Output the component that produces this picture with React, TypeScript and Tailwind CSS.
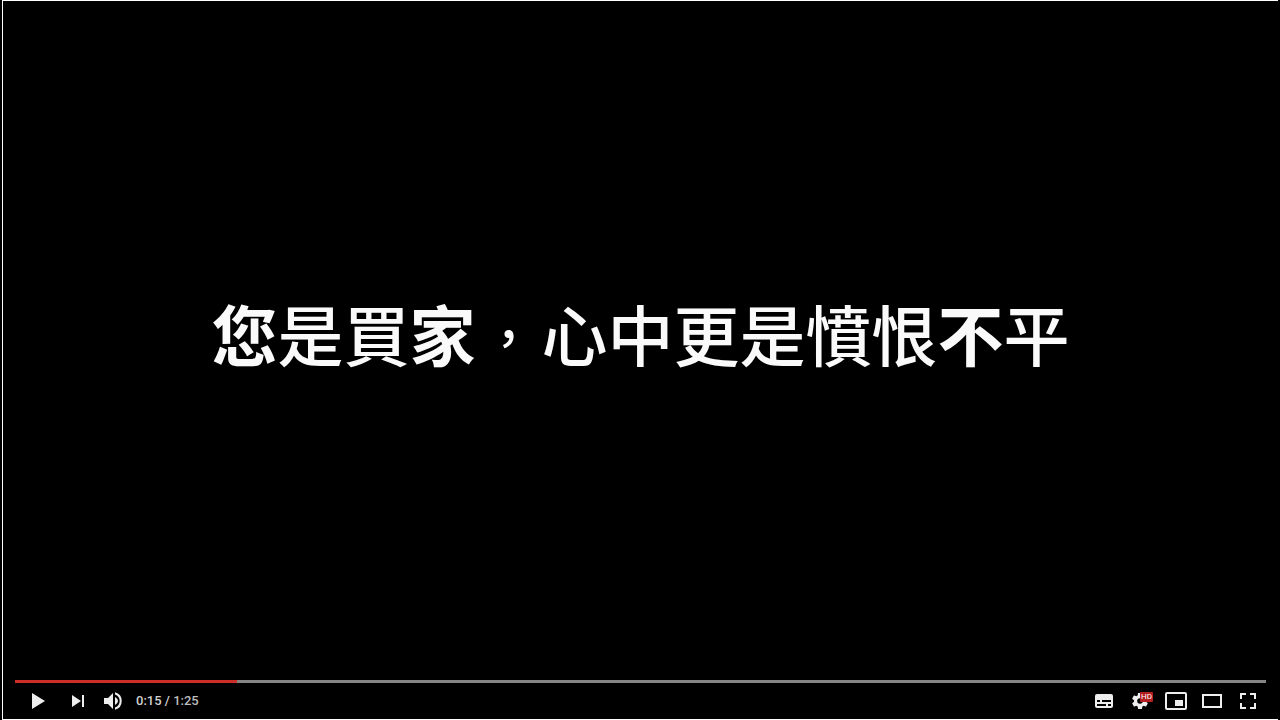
import React, { useState } from 'react';

const DURATION = 85;

const formatTime = (seconds: number) => {
  const rest = Math.floor(seconds % 60);
  return `${Math.floor(seconds / 60)}:${rest < 10 ? '0' : ''}${rest}`;
};

interface ControlButtonProps {
  label: string;
  children: React.ReactNode;
}

function ControlButton({ label, children }: ControlButtonProps) {
  return (
    <button
      type="button"
      aria-label={label}
      title={label}
      className="w-9 h-9 flex items-center justify-center text-[#eeeeee] hover:text-white"
    >
      <svg viewBox="0 0 36 36" className="w-9 h-9" fill="currentColor">
        {children}
      </svg>
    </button>
  );
}

function Caption() {
  return (
    <p className="text-center text-[66px] leading-[80px] font-medium text-[#fafafa] whitespace-nowrap">
      <b className="font-bold">您</b>是買<b className="font-bold">家</b>
      <span className="inline-block w-[66px] text-center text-[50px] leading-none align-[4px]">
        ，
      </span>
      心中更是憤恨
      <b className="font-bold">不</b>平
    </p>
  );
}

function App() {
  const [time] = useState(15.1);

  return (
    <div className="bg-black px-[2px]">
      <div
        lang="zh-Hant"
        className="h-screen flex flex-col border-y border-l border-white bg-black font-['Roboto','Noto_Sans_CJK_TC',sans-serif]"
      >
        <main className="flex-1 flex items-center justify-center overflow-hidden pb-1">
          <Caption />
        </main>

        <footer className="px-3">
          <div
            role="progressbar"
            aria-label="Progress"
            aria-valuemin={0}
            aria-valuemax={DURATION}
            aria-valuenow={time}
            className="h-[3px] bg-[#858585]"
          >
            <div
              className="h-full bg-[#cc2f28]"
              style={{ width: `${(time / DURATION) * 100}%` }}
            />
          </div>

          <div className="h-9 flex items-center justify-between">
            <div className="flex items-center pl-[5px]">
              <ControlButton label="Play">
                <path d="M12 10 L25 18 L12 26 Z" />
              </ControlButton>
              <div className="pl-1 flex items-center">
                <ControlButton label="Next">
                  <path d="M12 12 L21 18 L12 24 Z M22 12 H24 V24 H22 Z" />
                </ControlButton>
                <ControlButton label="Mute">
                  <path d="M8 15 V21 H12 L17 26 V10 L12 15 Z" />
                  <path d="M19 14 Q22 15.5 22 18 Q22 20.500 19 22 Z" />
                  <path d="M19 9.300 V11.400 A7 7 0 0 1 19 24.600 V26.700 A9 9 0 0 0 19 9.300 Z" />
                </ControlButton>
              </div>
              <div className="pl-1 text-[13px] font-medium text-[#d0d0d0]">
                <span>{formatTime(time)}</span>
                <span> / </span>
                <span className="text-[#bdbdbd]">{formatTime(DURATION)}</span>
              </div>
            </div>

            <div className="flex items-center">
              <ControlButton label="Subtitles">
                <path
                  fillRule="evenodd"
                  d="M11 11 H25 Q27 11 27 13 V23 Q27 25 25 25 H11 Q9 25 9 23 V13 Q9 11 11 11 Z M11 17 V19 H14 V17 Z M16 17 V19 H25 V17 Z M11 21 V23 H20 V21 Z M22 21 V23 H25 V21 Z"
                />
              </ControlButton>
              <div className="relative">
                <ControlButton label="Settings">
                  <path d="M23.940 18.780 C23.970 18.520 24 18.260 24 18 C24 17.730 23.970 17.480 23.940 17.220 L25.630 15.900 C25.780 15.780 25.830 15.560 25.730 15.390 L24.130 12.620 C24.030 12.450 23.820 12.380 23.640 12.450 L21.650 13.250 C21.240 12.930 20.780 12.660 20.290 12.460 L19.990 10.340 C19.970 10.150 19.800 10 19.600 10 H16.400 C16.200 10 16.030 10.150 16 10.340 L15.700 12.460 C15.210 12.660 14.760 12.930 14.350 13.250 L12.360 12.450 C12.180 12.380 11.970 12.450 11.870 12.620 L10.270 15.390 C10.170 15.570 10.220 15.780 10.370 15.900 L12.060 17.220 C12.020 17.480 12 17.740 12 18 C12 18.260 12.020 18.520 12.060 18.780 L10.370 20.100 C10.220 20.220 10.170 20.440 10.270 20.610 L11.870 23.380 C11.970 23.550 12.180 23.620 12.360 23.550 L14.350 22.750 C14.760 23.070 15.220 23.340 15.710 23.540 L16.010 25.660 C16.030 25.850 16.200 26 16.400 26 H19.600 C19.800 26 19.970 25.850 20 25.660 L20.300 23.540 C20.790 23.340 21.240 23.070 21.650 22.750 L23.640 23.550 C23.820 23.620 24.030 23.550 24.130 23.380 L25.730 20.610 C25.830 20.430 25.780 20.220 25.630 20.100 Z M18 20.800 A2.800 2.800 0 1 1 18 15.200 A2.800 2.800 0 0 1 18 20.800 Z" />
                </ControlButton>
                <span className="absolute top-[9px] left-[18px] w-[13px] h-[10px] rounded-[1px] bg-[#b3201f] text-white text-[8px] leading-[10px] text-center pointer-events-none">
                  HD
                </span>
              </div>
              <ControlButton label="Miniplayer">
                <path
                  fillRule="evenodd"
                  d="M9 9 H27 Q29 9 29 11 V25 Q29 27 27 27 H9 Q7 27 7 25 V11 Q7 9 9 9 Z M9 11 V25 H27 V11 Z"
                />
                <path d="M17 17 H25 V23 H17 Z" />
              </ControlButton>
              <ControlButton label="Theater mode">
                <path
                  fillRule="evenodd"
                  d="M8 11 H28 V25 H8 Z M10 13 V23 H26 V13 Z"
                />
              </ControlButton>
              <ControlButton label="Full screen">
                <path d="M10 10 H16 V12 H12 V16 H10 Z M20 10 H26 V16 H24 V12 H20 Z M10 20 H12 V24 H16 V26 H10 Z M24 20 H26 V26 H20 V24 H24 Z" />
              </ControlButton>
            </div>
          </div>
        </footer>
      </div>
    </div>
  );
}

export default App;
